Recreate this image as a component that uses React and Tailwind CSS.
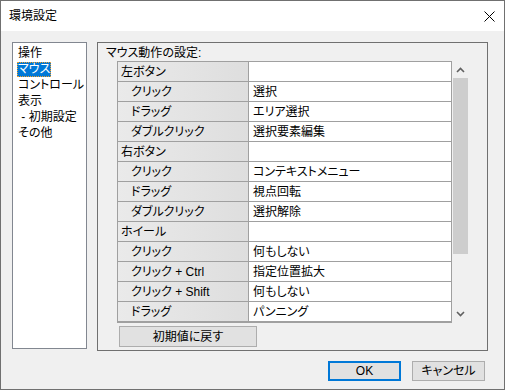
const menuItems = ["操作", "マウス", "コントロール", "表示", " - 初期設定", "その他"];

const rows = [
  { label: "左ボタン", value: "", head: true },
  { label: "クリック", value: "選択" },
  { label: "ドラッグ", value: "エリア選択" },
  { label: "ダブルクリック", value: "選択要素編集" },
  { label: "右ボタン", value: "", head: true },
  { label: "クリック", value: "コンテキストメニュー" },
  { label: "ドラッグ", value: "視点回転" },
  { label: "ダブルクリック", value: "選択解除" },
  { label: "ホイール", value: "", head: true },
  { label: "クリック", value: "何もしない" },
  { label: "クリック + Ctrl", value: "指定位置拡大" },
  { label: "クリック + Shift", value: "何もしない" },
  { label: "ドラッグ", value: "パンニング" },
];

function Chevron({ up }) {
  return (
    <svg width="9" height="6" viewBox="0 0 9 6" className={up ? "" : "rotate-180"}>
      <path d="M1 5 L4.5 1.5 L8 5" fill="none" stroke="#606060" strokeWidth="1.6" />
    </svg>
  );
}

export default function App() {
  return (
    <div className="w-[505px] h-[390px] border border-[#707070] bg-[#f0f0f0] flex flex-col text-[12px] text-black font-['Liberation_Sans','Noto_Sans_CJK_JP',sans-serif] [font-feature-settings:'palt']">
      <div className="h-[30px] bg-white flex items-center justify-between pl-[8px] pr-[9px]">
        <span className="leading-[16px]">環境設定</span>
        <svg width="11" height="11" viewBox="0 0 11 11">
          <path d="M0.5 0.5 L10.5 10.5 M10.5 0.5 L0.5 10.5" stroke="#000" strokeWidth="1" />
        </svg>
      </div>

      <div className="flex pt-[11px] pl-[11px] gap-[10px]">
        <div className="w-[75px] h-[307px] border border-[#828790] bg-white pl-[4px] pt-[2px]">
          {menuItems.map((item, i) => (
            <div key={i} className="h-[16px] flex items-center">
              {i === 1 ? (
                <span className="bg-[#0078d7] text-white px-[1px] leading-[15px] outline outline-1 outline-dotted outline-[#f0a030] -outline-offset-1">{item}</span>
              ) : (
                <span className="px-[1px] leading-[15px] whitespace-pre">{item}</span>
              )}
            </div>
          ))}
        </div>

        <div className="w-[391px] h-[309px] border border-[#707070] flex flex-col">
          <div className="h-[18px] pl-[8px] pt-[2px] leading-[16px]">マウス動作の設定:</div>
          <div className="flex ml-[19px]">
            <div className="w-[335px] border-t border-l border-[#a0a0a0] bg-white">
              {rows.map((row, i) => (
                <div
                  key={i}
                  className={`flex h-[20px] border-b border-[#a0a0a0] ${i === rows.length - 1 ? "border-b-2 h-[21px]" : ""}`}
                >
                  <div
                    className={`w-[131px] border-r border-[#a0a0a0] bg-gradient-to-r from-[#eaeaea] to-[#dedede] flex items-center whitespace-pre ${row.head ? "pl-[3px]" : "pl-[13px]"}`}
                  >
                    {row.label}
                  </div>
                  <div className="flex-1 border-r border-[#a0a0a0] flex items-center pl-[4px]">{row.value}</div>
                </div>
              ))}
            </div>
            <div className="w-[17px] h-[261px] flex flex-col">
              <div className="h-[17px] flex items-center justify-center">
                <Chevron up />
              </div>
              <div className="h-[176px] mx-[1px] bg-[#cdcdcd]" />
              <div className="flex-1" />
              <div className="h-[17px] flex items-center justify-center">
                <Chevron />
              </div>
            </div>
          </div>
          <button className="mt-[3px] ml-[21px] w-[138px] h-[21px] border border-[#adadad] bg-[#e1e1e1] leading-[16px]">
            初期値に戻す
          </button>
        </div>
      </div>

      <div className="flex justify-end gap-[11px] pr-[19px] mt-[10px]">
        <button className="w-[73px] h-[20px] border-2 border-[#0078d7] bg-[#e1e1e1] leading-[14px]">OK</button>
        <button className="w-[73px] h-[20px] border border-[#adadad] bg-[#e1e1e1] leading-[16px]">キャンセル</button>
      </div>
    </div>
  );
}
